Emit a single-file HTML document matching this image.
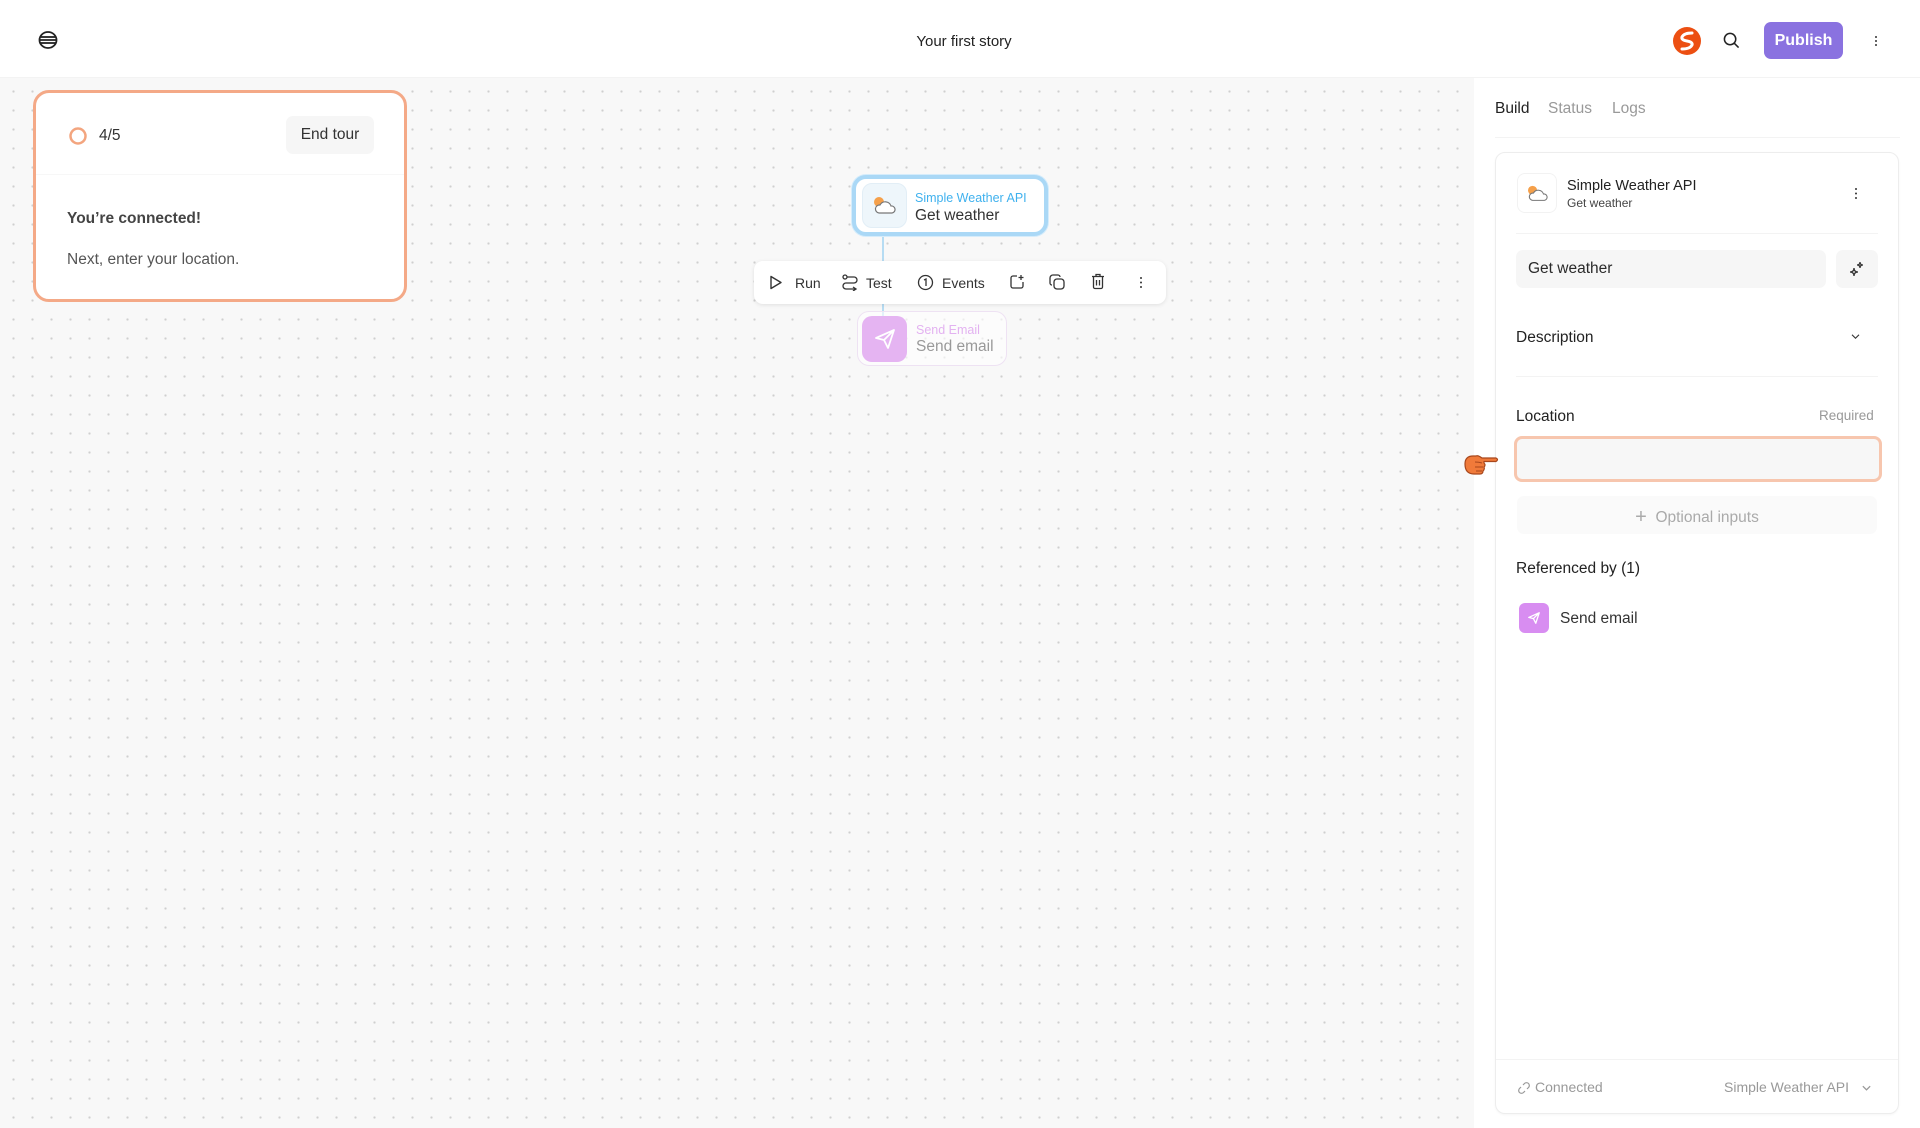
<!DOCTYPE html>
<html><head><meta charset="utf-8"><style>
*{box-sizing:border-box;margin:0;padding:0}
body{width:1920px;height:1128px;overflow:hidden;font-family:"Liberation Sans",sans-serif;background:#fff;color:#2b2b2b;position:relative}
.a{position:absolute}
.canvas{left:0;top:78px;width:1474px;height:1050px;background-color:#f8f8f8;background-image:radial-gradient(circle,#cfcfcf 1px,transparent 1.3px);background-size:19px 19px;background-position:4px 4px}
.t{white-space:nowrap}
</style></head><body>
<div class="a" style="left:0;top:0;width:1920px;height:78px;background:#fff;border-bottom:1px solid #f3f3f3"></div>
<svg class="a" style="left:38px;top:30px" width="20" height="20" viewBox="0 0 20 20" fill="none" stroke="#222" stroke-width="1.8"><ellipse cx="10" cy="10" rx="8.5" ry="8"/><line x1="2" y1="7" x2="18" y2="7"/><line x1="1.5" y1="10" x2="18.5" y2="10"/><line x1="2" y1="13" x2="18" y2="13"/></svg>
<div class="a t" style="left:0;width:1928px;top:33px;text-align:center;font-size:15px;color:#222">Your first story</div>
<svg class="a" style="left:1672px;top:26px" width="30" height="30" viewBox="0 0 30 30"><circle cx="15" cy="15" r="14" fill="#ec4f12"/><path d="M20 7 Q12 7 10 11 Q9 14 15 15 Q21 16 20 19 Q18 23 10 23" stroke="#fff" stroke-width="3" fill="none" stroke-linecap="round"/></svg>
<svg class="a" style="left:1723px;top:32px" width="17" height="17" viewBox="0 0 18 18" fill="none" stroke="#222" stroke-width="1.6"><circle cx="7.5" cy="7.5" r="6"/><line x1="12" y1="12" x2="16.5" y2="16.5"/></svg>
<div class="a t" style="left:1764px;top:22px;width:79px;height:37px;border-radius:7px;background:#8a72e0;color:#fff;font-size:16px;line-height:37px;text-align:center;font-weight:bold">Publish</div>
<div class="a" style="left:1875px;top:36px;width:2px;height:2px;border-radius:1px;background:#333;box-shadow:0 4px 0 #333,0 8px 0 #333"></div>
<div class="a canvas"></div>
<div class="a" style="left:33px;top:90px;width:374px;height:212px;background:#fff;border:3px solid #f4a987;border-radius:16px">
 <svg class="a" style="left:32px;top:33px" width="20" height="20"><circle cx="10" cy="10" r="7.5" fill="none" stroke="#f3a57f" stroke-width="2.5"/></svg>
 <div class="a t" style="left:63px;top:34px;font-size:15.5px;color:#333">4/5</div>
 <div class="a t" style="left:250px;top:23px;width:88px;height:38px;border-radius:7px;background:#f6f6f6;font-size:15.5px;line-height:38px;text-align:center;color:#333">End tour</div>
 <div class="a" style="left:0;top:81px;width:368px;height:1px;background:#f7f7f7"></div>
 <div class="a t" style="left:31px;top:117px;font-size:15.5px;font-weight:bold;color:#444">You’re connected!</div>
 <div class="a t" style="left:31px;top:158px;font-size:15.5px;color:#555">Next, enter your location.</div>
</div>
<div class="a" style="left:882px;top:236px;width:2px;height:80px;background:#b6dcf3"></div>
<div class="a" style="left:852px;top:175px;width:196px;height:61px;border-radius:14px;background:#fff;border:4px solid #aad8f6;box-shadow:0 0 0 1px #d5ecfb">
 <div class="a" style="left:6px;top:4px;width:45px;height:45px;border-radius:10px;background:#eef6fb;border:1px solid #e2eef6"></div>
 <svg class="a" style="left:15px;top:16px" width="28" height="22" viewBox="0 0 28 22"><circle cx="8" cy="7" r="5" fill="#f5a04a"/><path d="M8 18 a4 4 0 0 1 1-8 a6 6 0 0 1 11 1 a3.5 3.5 0 0 1 1 7z" fill="#fff" stroke="#777" stroke-width="1.2"/></svg>
 <div class="a t" style="left:59px;top:12px;font-size:12.5px;color:#3fb1ee">Simple Weather API</div>
 <div class="a t" style="left:59px;top:28px;font-size:15.5px;color:#333">Get weather</div>
</div>
<div class="a" style="left:857px;top:311px;width:150px;height:55px;border-radius:12px;background:rgba(255,255,255,.6);border:1px solid #eee2f3">
 <div class="a" style="left:4px;top:4px;width:45px;height:46px;border-radius:10px;background:#e5b4f2"></div>
 <svg class="a" style="left:15px;top:15px" width="24" height="24" viewBox="0 0 24 24" fill="none" stroke="#fff" stroke-width="1.8" stroke-linejoin="round"><path d="M3 11 L21 3 L15 21 L11 13 Z M11 13 L21 3"/></svg>
 <div class="a t" style="left:58px;top:11px;font-size:12.5px;color:#e3b2f1">Send Email</div>
 <div class="a t" style="left:58px;top:26px;font-size:15.5px;color:#999">Send email</div>
</div>
<div class="a" style="left:754px;top:261px;width:412px;height:43px;border-radius:9px;background:#fff;box-shadow:0 1px 4px rgba(0,0,0,.1)">
 <svg class="a" style="left:15px;top:14px" width="14" height="15" viewBox="0 0 14 15" fill="none" stroke="#333" stroke-width="1.4" stroke-linejoin="round"><path d="M2 1.5 L12 7.5 L2 13.5 Z"/></svg>
 <div class="a t" style="left:41px;top:14px;font-size:14px;color:#333">Run</div>
 <svg class="a" style="left:88px;top:13px" width="16" height="17" viewBox="0 0 16 17" fill="none" stroke="#333" stroke-width="1.3"><circle cx="3" cy="3" r="2"/><path d="M5 3 H12 a3 3 0 0 1 0 6 H4 a3 3 0 0 0 0 6 H14 M11 13 L14 15 L11 17"/></svg>
 <div class="a t" style="left:112px;top:14px;font-size:14px;color:#333">Test</div>
 <svg class="a" style="left:163px;top:13px" width="17" height="17" viewBox="0 0 17 17" fill="none" stroke="#333" stroke-width="1.3"><circle cx="8.5" cy="8.5" r="7"/><path d="M7 6 L9 5 V12"/></svg>
 <div class="a t" style="left:188px;top:14px;font-size:14px;color:#333">Events</div>
 <svg class="a" style="left:255px;top:13px" width="16" height="16" viewBox="0 0 16 16" fill="none" stroke="#333" stroke-width="1.3"><path d="M8 2 H4 a2 2 0 0 0 -2 2 V12 a2 2 0 0 0 2 2 H12 a2 2 0 0 0 2-2 V8 M12 1 V6 M9.5 3.5 H14.5"/></svg>
 <svg class="a" style="left:295px;top:13px" width="17" height="17" viewBox="0 0 17 17" fill="none" stroke="#333" stroke-width="1.3"><rect x="5" y="5" width="10" height="10" rx="3"/><path d="M11 3 a2 2 0 0 0 -2-2 H4 a3 3 0 0 0 -3 3 V9 a2 2 0 0 0 2 2"/></svg>
 <svg class="a" style="left:337px;top:12px" width="14" height="17" viewBox="0 0 14 17" fill="none" stroke="#333" stroke-width="1.3"><path d="M1 3.5 H13 M5 3 V1.5 H9 V3 M2.5 4 V14 a1.5 1.5 0 0 0 1.5 1.5 H10 a1.5 1.5 0 0 0 1.5-1.5 V4 M5.5 7 V12.5 M8.5 7 V12.5"/></svg>
 <div class="a" style="left:386px;top:16px;width:2px;height:2px;border-radius:1px;background:#333;box-shadow:0 4.5px 0 #333,0 9px 0 #333"></div>
</div>
<div class="a" style="left:1474px;top:78px;width:446px;height:1050px;background:#fff"></div>
<div class="a t" style="left:1495px;top:100px;font-size:15.5px;color:#222">Build</div>
<div class="a t" style="left:1548px;top:100px;font-size:15.5px;color:#999">Status</div>
<div class="a t" style="left:1612px;top:100px;font-size:15.5px;color:#999">Logs</div>
<div class="a" style="left:1495px;top:137px;width:405px;height:1px;background:#f3f3f3"></div>
<div class="a" style="left:1495px;top:152px;width:404px;height:962px;border:1px solid #ededed;border-radius:10px;box-shadow:0 1px 2px rgba(0,0,0,.04)"></div>
<div class="a" style="left:1517px;top:173px;width:40px;height:40px;border-radius:8px;border:1px solid #f2f2f2"></div>
<svg class="a" style="left:1525px;top:184px" width="26" height="20" viewBox="0 0 28 22"><circle cx="8" cy="7" r="5" fill="#f5a04a"/><path d="M8 18 a4 4 0 0 1 1-8 a6 6 0 0 1 11 1 a3.5 3.5 0 0 1 1 7z" fill="#fff" stroke="#777" stroke-width="1.2"/></svg>
<div class="a t" style="left:1567px;top:178px;font-size:14.5px;color:#222">Simple Weather API</div>
<div class="a t" style="left:1567px;top:196px;font-size:12px;color:#444">Get weather</div>
<div class="a" style="left:1855px;top:188px;width:2px;height:2px;border-radius:1px;background:#333;box-shadow:0 4.5px 0 #333,0 9px 0 #333"></div>
<div class="a" style="left:1516px;top:233px;width:362px;height:1px;background:#f3f3f3"></div>
<div class="a t" style="left:1516px;top:250px;width:310px;height:38px;border-radius:7px;background:#f6f6f6;font-size:15.5px;line-height:38px;padding-left:12px;color:#2a2a2a">Get weather</div>
<div class="a" style="left:1836px;top:250px;width:42px;height:38px;border-radius:7px;background:#f6f6f6"></div>
<svg class="a" style="left:1849px;top:261px" width="16" height="16" viewBox="0 0 16 16" fill="none" stroke="#333" stroke-width="1.3"><path d="M5 7 Q5 11 1 11 Q5 11 5 15 Q5 11 9 11 Q5 11 5 7Z M11 1 Q11 4 8 4 Q11 4 11 7 Q11 4 14 4 Q11 4 11 1Z"/></svg>
<div class="a t" style="left:1516px;top:329px;font-size:15.5px;color:#222">Description</div>
<svg class="a" style="left:1850px;top:333px" width="11" height="7" viewBox="0 0 12 8" fill="none" stroke="#333" stroke-width="1.3"><path d="M2 2 L6 6 L10 2"/></svg>
<div class="a" style="left:1516px;top:376px;width:362px;height:1px;background:#f3f3f3"></div>
<div class="a t" style="left:1516px;top:408px;font-size:15.5px;color:#222">Location</div>
<div class="a t" style="left:1819px;top:408px;font-size:13.5px;color:#999">Required</div>
<div class="a" style="left:1514px;top:436px;width:368px;height:46px;border-radius:8px;background:#f7f7f7;border:3px solid #f7c6ae"></div>
<svg class="a" style="left:1462px;top:452px" width="38" height="26" viewBox="0 0 38 26"><path d="M3 12 Q3 4 11 4 L14 4 Q16 3 20 6 L34 6 Q37 7.5 34 9.5 L22 9.5 L22 11 Q24 13 22 15 Q23 17 21 19 Q21 22 18 22 L12 22 Q3 22 3 12Z" fill="#f07a3a" stroke="#a8471c" stroke-width="1.2" stroke-linejoin="round"/><path d="M13 10 Q17 10 20 11 M13 15 L21 15 M14 19 L20 19" stroke="#a8471c" stroke-width="1" fill="none"/></svg>
<div class="a" style="left:1517px;top:496px;width:360px;height:38px;border-radius:7px;background:#fafafa"></div>
<div class="a t" style="left:1517px;top:505px;width:360px;text-align:center;font-size:15.5px;color:#aaa"><span style="font-size:20px;position:relative;top:1px">+</span>&nbsp; Optional inputs</div>
<div class="a t" style="left:1516px;top:560px;font-size:15.5px;color:#222">Referenced by (1)</div>
<div class="a" style="left:1519px;top:603px;width:30px;height:30px;border-radius:6px;background:#d88df1"></div>
<svg class="a" style="left:1527px;top:611px" width="14" height="14" viewBox="0 0 24 24" fill="none" stroke="#fff" stroke-width="2.2" stroke-linejoin="round"><path d="M3 11 L21 3 L15 21 L11 13 Z M11 13 L21 3"/></svg>
<div class="a t" style="left:1560px;top:610px;font-size:15.5px;color:#333">Send email</div>
<div class="a" style="left:1496px;top:1059px;width:402px;height:1px;background:#f3f3f3"></div>
<svg class="a" style="left:1518px;top:1082px" width="12" height="12" viewBox="0 0 12 12" fill="none" stroke="#999" stroke-width="1.2"><path d="M5 3 L6.5 1.5 a2.5 2.5 0 0 1 4 4 L9 7 M7 9 L5.5 10.5 a2.5 2.5 0 0 1 -4-4 L3 5"/></svg>
<div class="a t" style="left:1535px;top:1079px;font-size:14px;color:#999">Connected</div>
<div class="a t" style="left:1724px;top:1079px;font-size:14px;color:#999">Simple Weather API</div>
<svg class="a" style="left:1861px;top:1084px" width="11" height="8" viewBox="0 0 12 8" fill="none" stroke="#999" stroke-width="1.4"><path d="M2 2 L6 6 L10 2"/></svg>
</body></html>
